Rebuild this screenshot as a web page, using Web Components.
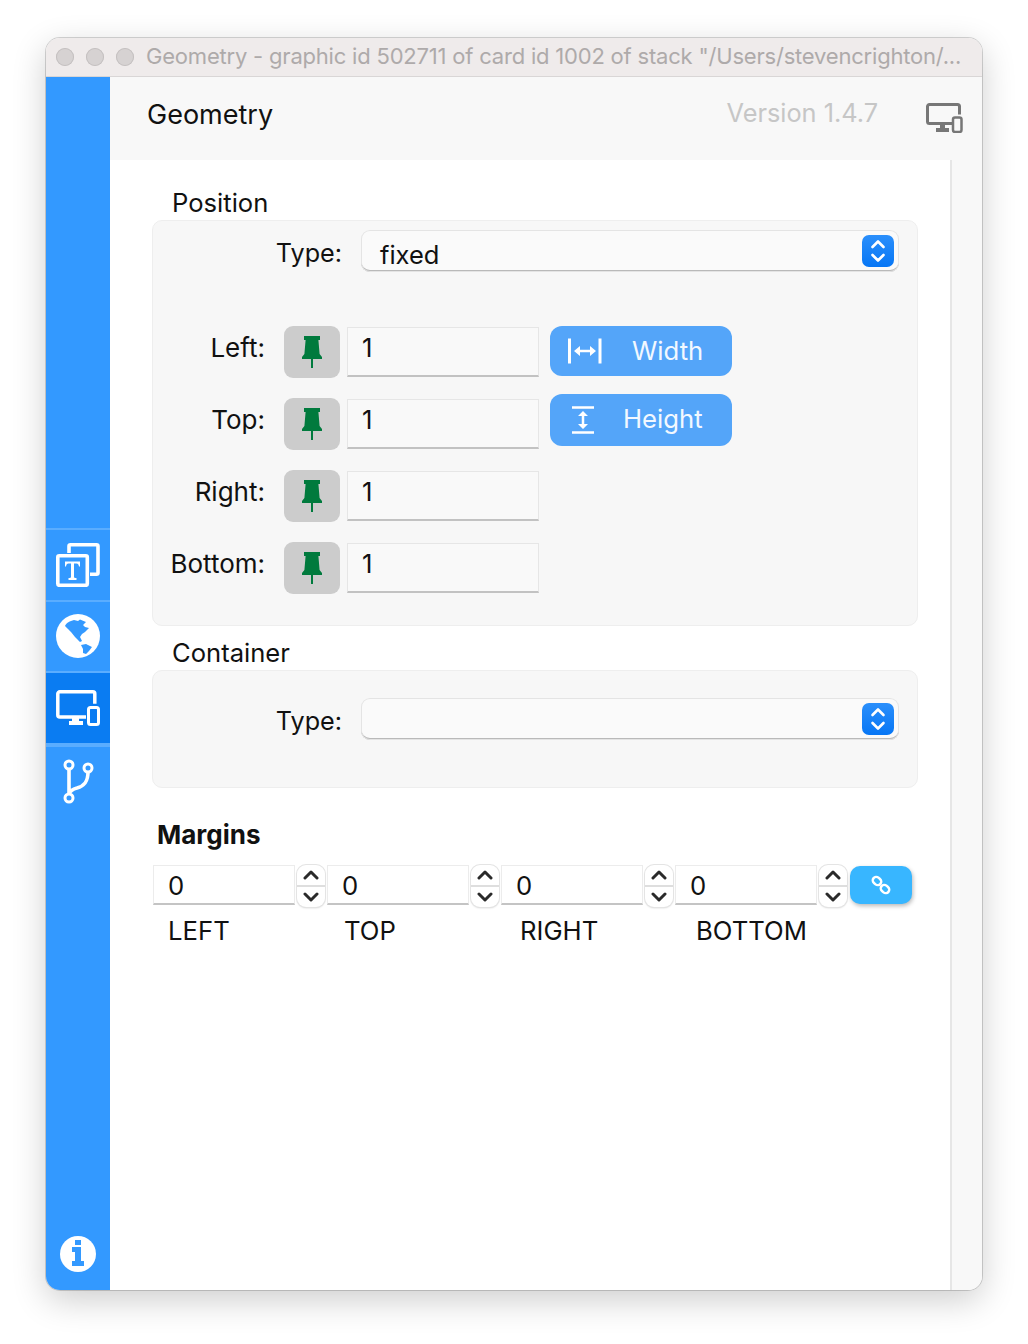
<!DOCTYPE html>
<html>
<head>
<meta charset="utf-8">
<title>Geometry</title>
<style>
  html, body { margin: 0; background: #fff; }
  body {
    font-family: Inter, "Liberation Sans", sans-serif; color: #111;
    height: 1344px; box-sizing: border-box; padding: 38px 0 0 46px; overflow: hidden;
  }
</style>
</head>
<body>
<geo-window>
  <geo-sidebar slot="side"></geo-sidebar>
  <geo-header slot="head" title-text="Geometry" version="Version 1.4.7"></geo-header>

  <geo-panel label="Position">
    <geo-select label="Type:" value="fixed"></geo-select>
    <div style="display:flex;margin-top:54px">
      <div style="display:flex;flex-direction:column;gap:20px">
        <pin-row label="Left:" value="1"></pin-row>
        <pin-row label="Top:" value="1"></pin-row>
        <pin-row label="Right:" value="1"></pin-row>
        <pin-row label="Bottom:" value="1"></pin-row>
      </div>
      <div style="display:flex;flex-direction:column;gap:18px;margin-left:11px">
        <size-button icon="width" label="Width"></size-button>
        <size-button icon="height" label="Height"></size-button>
      </div>
    </div>
  </geo-panel>

  <geo-panel label="Container" style="--panel-pad:27px 0 47px;--panel-gap:13px">
    <geo-select label="Type:" value=""></geo-select>
  </geo-panel>

  <margin-group></margin-group>
</geo-window>

<script>
// icons, all drawn to their own viewBox
const ICONS = {
  pin: `<svg width="20" height="32" viewBox="0 0 20 32"><path fill="#007a3d" d="M2 0h16v4h-1.6l1.2 14 2.4 3v2h-9v9H9V23H0v-2l2.4-3L3.6 4H2z"/></svg>`,
  width: `<svg width="34" height="28" viewBox="0 0 34 28" fill="none" stroke="#fff"><path stroke-width="3" d="M1.500 1.500v25M32 1.500v25"/><path stroke-width="2.500" d="M9 14h16"/><path fill="#fff" stroke="none" d="M6 14l6-5v10zM28 14l-6-5v10z"/></svg>`,
  height: `<svg width="24" height="28" viewBox="0 0 24 28" fill="none" stroke="#fff"><path stroke-width="2.600" d="M1 1.500h22M1 26.500h22"/><path stroke-width="2.500" d="M12 8v12"/><path fill="#fff" stroke="none" d="M12 5l5 5H7zM12 23l5-5H7z"/></svg>`,
  screen: `<svg width="37" height="30" viewBox="0 0 37 30" fill="none"><path stroke="#777" stroke-width="3" d="M26 20.500H3.500a2 2 0 0 1-2-2V3.500a2 2 0 0 1 2-2h28a2 2 0 0 1 2 2v8"/><path fill="#777" d="M14 20h5v5h-5zM10 25h13v4H10z"/><rect x="27" y="14.500" width="8.500" height="14.500" rx="2" fill="#f8f8f8" stroke="#777" stroke-width="2.500"/></svg>`,
  screenWhite: `<svg width="44" height="36" viewBox="0 0 44 36" fill="none"><path stroke="#fff" stroke-width="3.500" d="M30 27H3.800a2 2 0 0 1-2-2V3.800a2 2 0 0 1 2-2h33a2 2 0 0 1 2 2v10"/><path fill="#fff" d="M16 27h7v5h-7zM13 31h14v4H13z"/><rect x="32.500" y="17.500" width="10" height="17" rx="2" fill="#0a7cf2" stroke="#fff" stroke-width="3"/></svg>`,
  copy: `<svg width="44" height="44" viewBox="0 0 44 44" fill="none"><path stroke="#fff" stroke-width="3.600" d="M13 10V3.300a1.500 1.500 0 0 1 1.500-1.500h26a1.500 1.500 0 0 1 1.500 1.500v26.500a1.500 1.500 0 0 1-1.500 1.500H34"/><rect x="1.800" y="12.800" width="29.500" height="29.500" rx="1.500" stroke="#fff" stroke-width="3.600"/><path fill="#fff" d="M9 18.500h15v5h-1c-.3-2-1-3-2.500-3H18v13.500c0 .8.800 1 2.500 1v2h-8v-2c1.700 0 2.500-.2 2.500-1V20.500h-2.500c-1.500 0-2.200 1-2.500 3H9z"/></svg>`,
  globe: `<svg width="44" height="44" viewBox="0 0 44 44"><circle cx="22" cy="22" r="22" fill="#fff"/><path fill="#3399ff" d="M9 12c1-3 5-5 9-6l4 1 2-1.500 6 2.500-3 3 2 2 4 1-4 4-3 2-2 3 2 4-2 1-3-3-2-2-4-5-3-3z"/><path fill="#3399ff" d="M25 31l5-1 6 3-3 4-3 3-3-1v-4z"/></svg>`,
  branch: `<svg width="32" height="46" viewBox="0 0 32 46" fill="none" stroke="#fff"><g stroke-width="3"><circle cx="7" cy="7" r="4"/><circle cx="7" cy="40" r="4"/><circle cx="26" cy="10" r="4"/></g><path stroke-width="3.600" d="M7 11v25M26 14c0 10-4 14-11 16-4 1-7 3-8 6"/></svg>`,
  info: `<svg width="36" height="36" viewBox="0 0 36 36"><circle cx="18" cy="18" r="18" fill="#fff"/><path fill="#3399ff" d="M15 4h6v5h-6zM12 11h9v14h3v5H12v-5h3v-9h-3z"/></svg>`,
  link: `<svg width="20" height="20" viewBox="0 0 20 20" fill="none" stroke="#fff" stroke-width="2.400"><rect x="-4.500" y="-3.500" width="9" height="7" rx="3.500" transform="translate(6 6) rotate(40)"/><rect x="-4.500" y="-3.500" width="9" height="7" rx="3.500" transform="translate(14 14) rotate(40)"/></svg>`,
  updown: `<svg width="16" height="26" viewBox="0 0 16 26" fill="none" stroke="#fff" stroke-width="2.600" stroke-linecap="round" stroke-linejoin="round"><path d="M2.500 9L8 3.500 13.500 9M2.500 17L8 22.500 13.500 17"/></svg>`,
  chevUp: `<svg width="16" height="10" viewBox="0 0 16 10" fill="none" stroke="#2a2a2a" stroke-width="3" stroke-linecap="round" stroke-linejoin="round"><path d="M2 8l6-6 6 6"/></svg>`,
  chevDown: `<svg width="16" height="10" viewBox="0 0 16 10" fill="none" stroke="#2a2a2a" stroke-width="3" stroke-linecap="round" stroke-linejoin="round"><path d="M2 2l6 6 6-6"/></svg>`,
};

class GeoWindow extends HTMLElement {
  constructor() {
    super();
    this.attachShadow({ mode: 'open' }).innerHTML = `
      <style>
        :host {
          display: flex; flex-direction: column;
          width: 936px; height: 1252px;
          border-radius: 14px; overflow: hidden; background: #fff;
          box-shadow: 0 0 0 1px rgba(0,0,0,.16), 0 10px 34px rgba(0,0,0,.2);
        }
        .title {
          height: 38px; flex: none; display: flex; align-items: center; padding-left: 10px;
          background: #efebeb; border-bottom: 1px solid #d9d6d6;
          font-size: 22px; color: #aeaaaa; white-space: nowrap;
        }
        .dot {
          width: 18px; height: 18px; border-radius: 50%; margin-right: 12px;
          background: #d6d2d2; box-shadow: inset 0 0 0 1px #c4c0c0;
        }
        .title span { margin: -2px 0 0 0; letter-spacing: -.2px; }
        .body { flex: 1; display: flex; min-height: 0; }
        .main { flex: 1; display: flex; flex-direction: column; min-width: 0; }
        .row { flex: 1; display: flex; min-height: 0; }
        .content { flex: 1; padding: 27px 32px 0 42px; display: flex; flex-direction: column; }
        .track { width: 30px; flex: none; background: #f8f8f8; border-left: 2px solid #e6e6e6; }
      </style>
      <div class="title">
        <div class="dot"></div><div class="dot"></div><div class="dot"></div>
        <span>Geometry - graphic id 502711 of card id 1002 of stack "/Users/stevencrighton/...</span>
      </div>
      <div class="body">
        <slot name="side"></slot>
        <div class="main">
          <slot name="head"></slot>
          <div class="row">
            <div class="content"><slot></slot></div>
            <div class="track"></div>
          </div>
        </div>
      </div>`;
  }
}

class GeoSidebar extends HTMLElement {
  constructor() {
    super();
    const tile = (name, on) => `<div class="tile${on ? ' on' : ''}">${ICONS[name]}</div>`;
    this.attachShadow({ mode: 'open' }).innerHTML = `
      <style>
        :host {
          display: flex; flex-direction: column; width: 64px; flex: none;
          background: #3399ff; padding-top: 451px; box-sizing: border-box;
        }
        .tile {
          height: 69.5px; display: flex; align-items: center; justify-content: center;
          border-top: 2px solid #5aadff;
        }
        .tile.on { background: #0a7cf2; }
        .tile:nth-child(4) { border-bottom: 2px solid #5aadff; }
        .info { margin-top: auto; height: 54px; display: flex; justify-content: center; }
      </style>
      ${tile('copy')}${tile('globe')}${tile('screenWhite', true)}${tile('branch')}
      <div class="info">${ICONS.info}</div>`;
  }
}

class GeoHeader extends HTMLElement {
  constructor() {
    super();
    this.attachShadow({ mode: 'open' }).innerHTML = `
      <style>
        :host {
          display: flex; align-items: center; height: 83px; flex: none;
          background: #f8f8f8; padding: 0 19px 6px 37px; box-sizing: border-box;
        }
        .t { font-size: 27px; color: #111; margin-top: -2px; }
        .v { margin-left: auto; font-size: 25.3px; color: #c6c6c6; margin-top: -6px; }
        .i { margin-left: 48px; display: flex; margin-top: 5px; }
      </style>
      <div class="t">${this.getAttribute('title-text')}</div>
      <div class="v">${this.getAttribute('version')}</div>
      <div class="i">${ICONS.screen}</div>`;
  }
}

class GeoPanel extends HTMLElement {
  constructor() {
    super();
    this.attachShadow({ mode: 'open' }).innerHTML = `
      <style>
        :host { display: block; }
        .label { font-size: 25.6px; line-height: 31px; padding: 0 0 2px 20px; color: #111; }
        .box {
          background: #f7f7f7; border: 1px solid #eeeeee; border-radius: 10px;
          padding: var(--panel-pad, 9px 0 31px); margin-bottom: var(--panel-gap, 11px);
        }
      </style>
      <div class="label">${this.getAttribute('label')}</div>
      <div class="box"><slot></slot></div>`;
  }
}

class GeoSelect extends HTMLElement {
  constructor() {
    super();
    this.attachShadow({ mode: 'open' }).innerHTML = `
      <style>
        :host { display: flex; align-items: center; height: 42px; }
        .l { width: 189px; text-align: right; font-size: 25.2px; margin-top: 4px; }
        .s {
          margin-left: 19px; width: 538px; height: 42px; box-sizing: border-box;
          background: #fafafa; border-radius: 9px; display: flex; align-items: center;
          padding: 0 5px 0 19px; font-size: 25.5px;
          box-shadow: inset 0 0 0 1px #e4e4e4, inset 0 -2px 0 #b9b9b9;
        }
        .v { flex: 1; margin-top: 6px; }
        .b {
          width: 32px; height: 32px; border-radius: 7px; display: flex;
          align-items: center; justify-content: center;
          background: linear-gradient(#2b8ffb, #0676f5);
        }
      </style>
      <div class="l">${this.getAttribute('label')}</div>
      <div class="s"><div class="v">${this.getAttribute('value')}</div><div class="b">${ICONS.updown}</div></div>`;
  }
}

class PinRow extends HTMLElement {
  constructor() {
    super();
    this.attachShadow({ mode: 'open' }).innerHTML = `
      <style>
        :host { display: flex; align-items: center; height: 52px; }
        .l { width: 112px; text-align: right; font-size: 26px; margin-top: -10px; }
        .p {
          margin-left: 19px; width: 56px; height: 52px; border-radius: 9px; background: #cccccc;
          display: flex; align-items: center; justify-content: center;
        }
        .i {
          margin-left: 7px; width: 192px; height: 50px; box-sizing: border-box;
          background: #f9f9f9; border: 1px solid #e6e6e6; border-bottom: 2px solid #c2c2c2;
          padding: 0 0 8px 14px; font-size: 25.7px; display: flex; align-items: center;
        }
      </style>
      <div class="l">${this.getAttribute('label')}</div>
      <div class="p">${ICONS.pin}</div>
      <div class="i">${this.getAttribute('value')}</div>`;
  }
}

class SizeButton extends HTMLElement {
  constructor() {
    super();
    const h = this.getAttribute('icon') === 'height';
    this.attachShadow({ mode: 'open' }).innerHTML = `
      <style>
        :host {
          display: flex; align-items: center; width: 182px; height: ${h ? 52 : 50}px;
          background: #54a5f9; border-radius: 12px; color: #fff; font-size: 25.7px;
          padding-left: ${h ? 21 : 18}px; box-sizing: border-box;
        }
        .i { display: flex; }
        .t { margin: ${h ? -4 : -2}px 0 0 ${h ? 28 : 30}px; color: #f2f8ff; }
      </style>
      <div class="i">${ICONS[this.getAttribute('icon')]}</div>
      <div class="t">${this.getAttribute('label')}</div>`;
  }
}

class MarginField extends HTMLElement {
  constructor() {
    super();
    this.attachShadow({ mode: 'open' }).innerHTML = `
      <style>
        :host { display: block; width: 174px; }
        .top { display: flex; }
        .i {
          width: 142px; height: 40px; box-sizing: border-box; background: #fff;
          border: 1px solid #ececec; border-bottom: 2px solid #c4c4c4;
          font-size: 25.7px; padding: 1px 0 0 14px; display: flex; align-items: center;
        }
        .st {
          margin-left: 2px; width: 28px; height: 42px; box-sizing: border-box;
          background: #fff; border-radius: 9px; display: flex; flex-direction: column;
          box-shadow: 0 0 0 1px #e4e4e4, 0 1px 2px rgba(0,0,0,.2);
        }
        .st div { flex: 1; display: flex; align-items: center; justify-content: center; }
        .st div:first-child { border-bottom: 2px solid #dedede; }
        .l { font-size: 25.7px; margin-top: 7px; line-height: 34px; padding-left: var(--label-x, 15px); }
      </style>
      <div class="top">
        <div class="i">${this.getAttribute('value')}</div>
        <div class="st"><div>${ICONS.chevUp}</div><div>${ICONS.chevDown}</div></div>
      </div>
      <div class="l">${this.getAttribute('label')}</div>`;
  }
}

class MarginGroup extends HTMLElement {
  constructor() {
    super();
    this.attachShadow({ mode: 'open' }).innerHTML = `
      <style>
        :host { display: block; margin-top: 17px; }
        h3 { margin: 0 0 13px 5px; font-size: 26px; line-height: 34px; font-weight: 700; color: #111; }
        .row { display: flex; margin-left: 1px; align-items: flex-start; }
        .link {
          margin: 1px 0 0 1px; width: 62px; height: 38px; border-radius: 10px; background: #38b6ff;
          display: flex; align-items: center; justify-content: center;
          box-shadow: 1px 2px 4px rgba(0,0,0,.28);
        }
      </style>
      <h3>Margins</h3>
      <div class="row">
        <margin-field value="0" label="LEFT"></margin-field>
        <margin-field value="0" label="TOP" style="--label-x:17px"></margin-field>
        <margin-field value="0" label="RIGHT" style="--label-x:19px"></margin-field>
        <margin-field value="0" label="BOTTOM" style="--label-x:21px"></margin-field>
        <div class="link">${ICONS.link}</div>
      </div>`;
  }
}

customElements.define('geo-window', GeoWindow);
customElements.define('geo-sidebar', GeoSidebar);
customElements.define('geo-header', GeoHeader);
customElements.define('geo-panel', GeoPanel);
customElements.define('geo-select', GeoSelect);
customElements.define('pin-row', PinRow);
customElements.define('size-button', SizeButton);
customElements.define('margin-field', MarginField);
customElements.define('margin-group', MarginGroup);
</script>
</body>
</html>
